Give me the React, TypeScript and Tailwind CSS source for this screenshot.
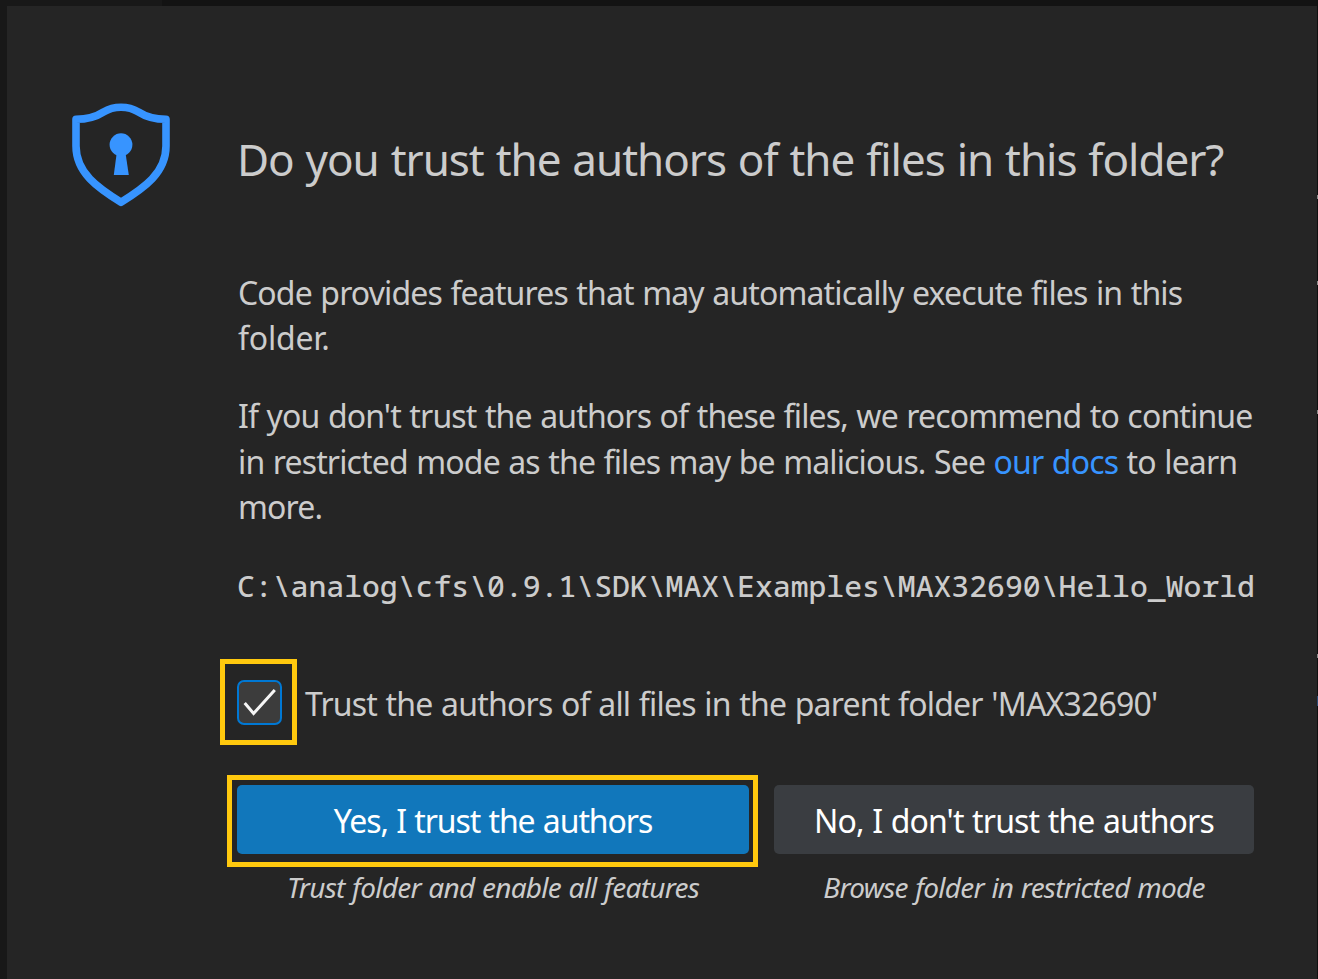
function ShieldIcon() {
  return (
    <svg width="102" height="108" viewBox="70 101 102 108" className="block shrink-0" aria-hidden="true">
      <path
        d="M76 119.3 C88 119.3 95.5 117.2 103.5 112 C109.5 108.3 114.5 107.2 121 107.2 C127.5 107.2 132.5 108.3 138.5 112 C146.5 117.2 154 119.3 166 119.3 V146 C166 173 144 188 121 202.3 C98 188 76 173 76 146 Z"
        fill="none"
        stroke="#3794ff"
        strokeWidth="7.6"
        strokeLinejoin="round"
      />
      <circle cx="121" cy="144.7" r="11.4" fill="#3794ff" />
      <path d="M116.7 153 H125.5 L128.8 175 H113.8 Z" fill="#3794ff" />
    </svg>
  );
}

function EdgeSpecks() {
  return (
    <div className="flex w-px shrink-0 flex-col bg-[#101010]">
      <span className="mt-[195px] h-1 bg-[#8a8a8a]" />
      <span className="mt-[82px] h-1 bg-[#8a8a8a]" />
      <span className="mt-[125px] h-1 bg-[#8a8a8a]" />
      <span className="mt-[240px] h-1 bg-[#8a8a8a]" />
      <span className="mt-[38px] h-2.5 bg-[#2b4a74]" />
    </div>
  );
}

export default function App() {
  return (
    <div className="flex h-[979px] w-[1318px] overflow-hidden bg-[#181818] font-['Noto_Sans',sans-serif] text-[32px] tracking-[-0.86px] [word-spacing:1px] text-[#cccccc]">
      <div className="flex w-[1317px] flex-col">
        <div className="flex h-1.5 shrink-0 justify-end">
          <div className="w-[1155px] bg-[#131313]" />
        </div>
        <main className="ml-[7px] flex-1 bg-[#252525] pl-[63px]">
          <header className="flex pt-[95px]">
            <ShieldIcon />
            <h1 className="mt-[27px] ml-[65px] text-[44px] leading-[62px] font-normal tracking-[-1.03px] [word-spacing:1.5px] whitespace-nowrap">
              Do you trust the authors of the files in this folder?
            </h1>
          </header>
          <div className="ml-[167px] pt-[61px] whitespace-nowrap">
            <p className="pl-px leading-[45px]">
              Code provides features that may automatically execute files in this
              <br />
              <span className="tracking-[-0.2px]">folder.</span>
            </p>
            <p className="mt-[33px] pl-px leading-[45.5px]">
              If you don't trust the authors of these files, we recommend to continue
              <br />
              in restricted mode as the files may be malicious. See{" "}
              <a className="text-[#3794ff]">our docs</a> to learn
              <br />
              more.
            </p>
            <p className="mt-[33px] font-['Noto_Sans_Mono',monospace] text-[29.77px] leading-[45px] font-medium tracking-normal">
              C:\analog\cfs\0.9.1\SDK\MAX\Examples\MAX32690\Hello_World
            </p>
            <div className="mt-[72px] flex h-[45px] items-start">
              <div className="relative size-[45px] shrink-0 rounded-[7px] border-2 border-[#0078d4] bg-[#3c3c3c]">
                <svg width="41" height="41" viewBox="239 682 41 41" className="block" aria-hidden="true">
                  <path d="M244.7 703 L253.6 713.5 L274.8 690" fill="none" stroke="#f5f5f5" strokeWidth="3" />
                </svg>
                <div className="absolute -top-[23px] -left-[19px] h-[86px] w-[77px] border-[5px] border-[#ffc90e]" />
              </div>
              <span className="ml-[23px] leading-[48px] tracking-[-0.8px]">
                Trust the authors of all files in the parent folder 'MAX32690'
              </span>
            </div>
            <div className="mt-[60px] flex gap-[25px] text-center">
              <div className="w-[512px]">
                <div className="relative h-[69px] rounded-[5px] bg-[#1177bb] leading-[71px] tracking-[-1.08px] text-white">
                  Yes, I trust the authors
                  <div className="absolute -top-2.5 -left-2.5 h-[92px] w-[531px] border-[5px] border-[#ffc90e]" />
                </div>
                <p className="mt-[13px] text-[28px] leading-[41px] tracking-[-0.75px] italic">
                  Trust folder and enable all features
                </p>
              </div>
              <div className="w-[480px]">
                <div className="h-[69px] rounded-[5px] bg-[#3a3d41] leading-[71px] tracking-[-0.86px] text-white">
                  No, I don't trust the authors
                </div>
                <p className="mt-[13px] text-[28px] leading-[41px] tracking-[-0.76px] italic">
                  Browse folder in restricted mode
                </p>
              </div>
            </div>
          </div>
        </main>
      </div>
      <EdgeSpecks />
    </div>
  );
}
